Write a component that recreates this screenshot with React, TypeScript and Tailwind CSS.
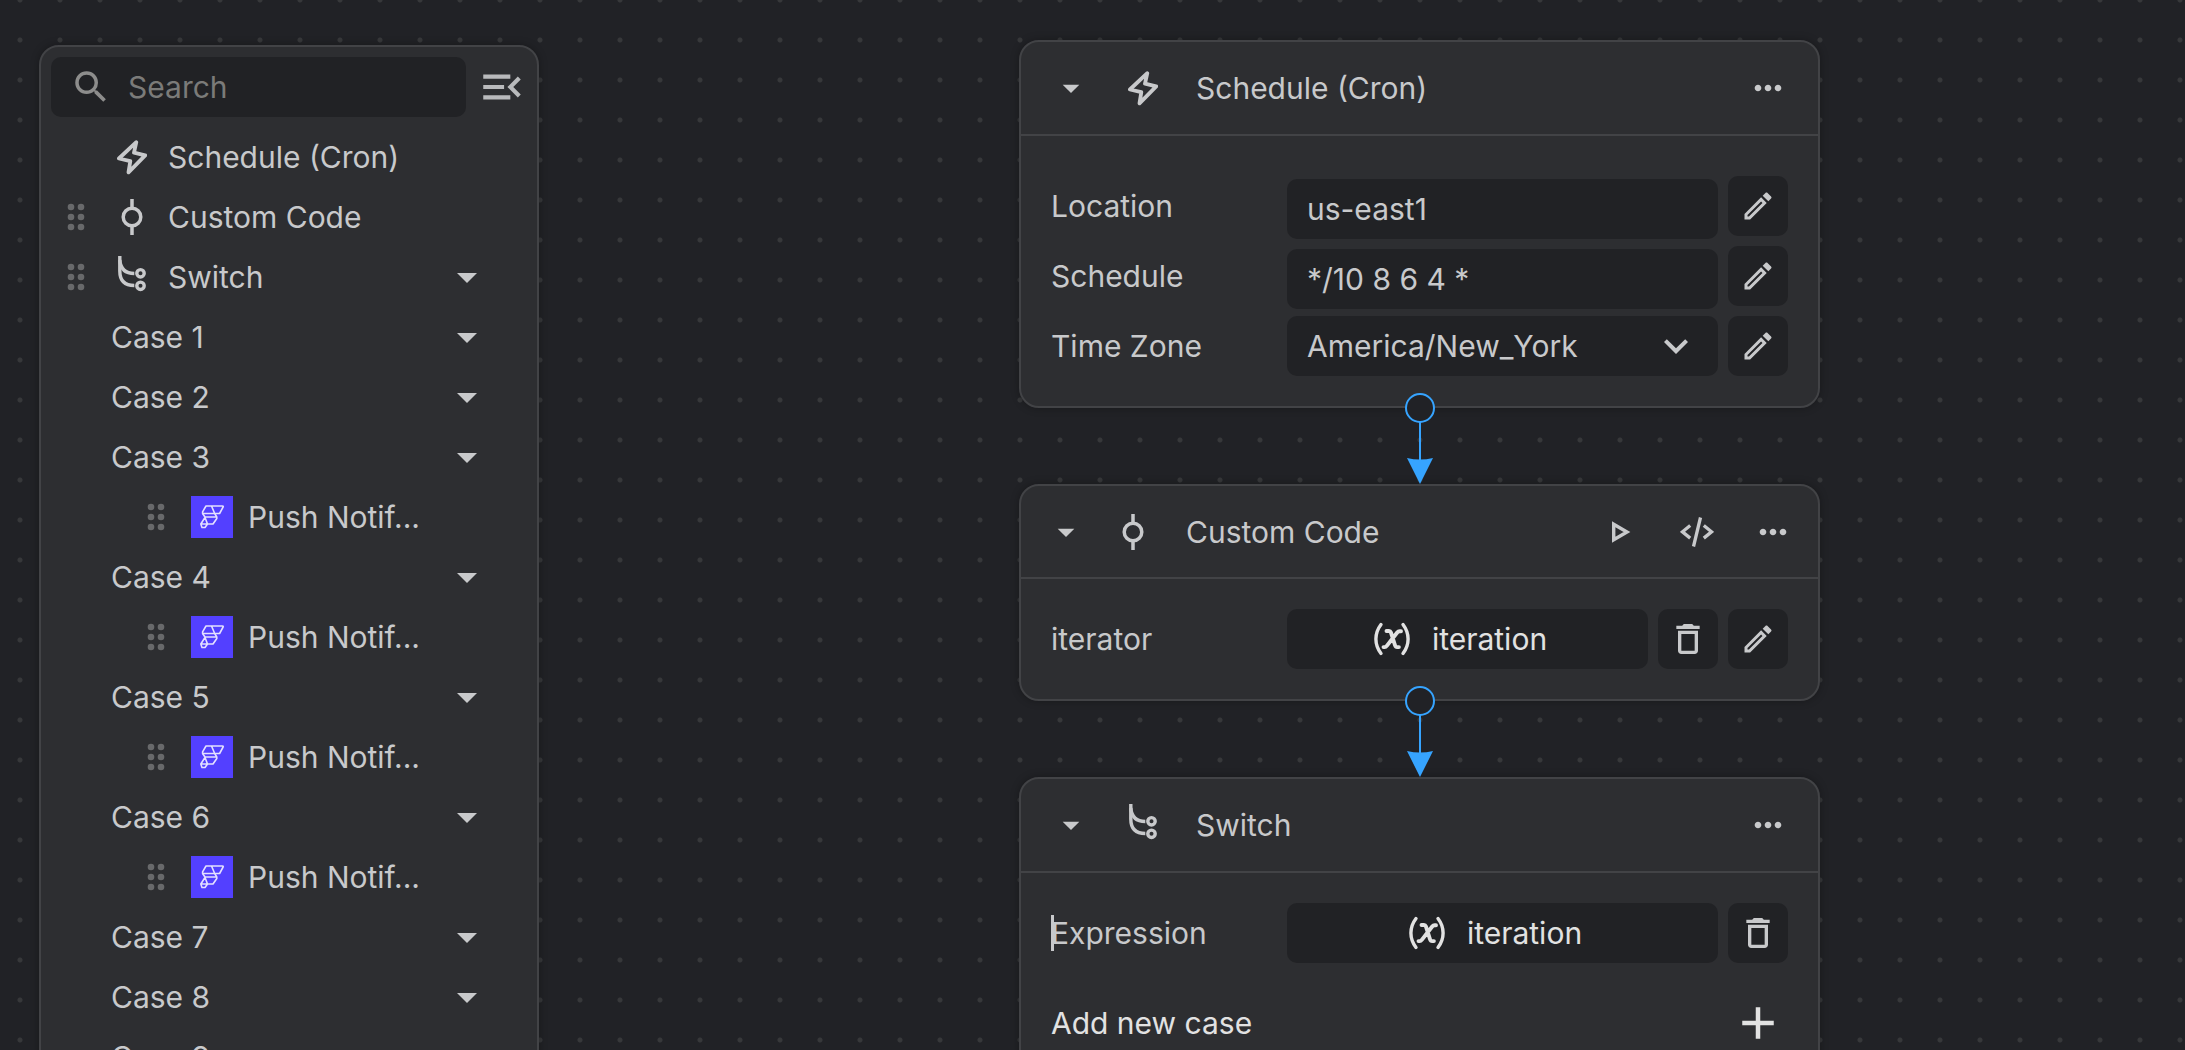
import { useState, type ReactNode } from "react";
import {
  MdAdd,
  MdArrowDropDown,
  MdDeleteOutline,
  MdExpandMore,
  MdMenuOpen,
  MdMoreHoriz,
  MdOutlineEdit,
  MdSearch,
} from "react-icons/md";

function BoltIcon() {
  return (
    <svg width="30" height="35" viewBox="0 0 30 35" fill="none" stroke="currentColor" strokeWidth="3.8" strokeLinejoin="round" aria-hidden="true">
      <path d="M19.3 2.2 17 12.7l11.2 2.6-16.7 17L13.3 21.2 1.9 18.5Z" />
    </svg>
  );
}

function CommitIcon() {
  return (
    <svg width="22" height="36" viewBox="0 0 22 36" fill="none" stroke="currentColor" strokeWidth="3.5" aria-hidden="true">
      <circle cx="11" cy="18" r="8.8" />
      <path d="M11 0v9.2M11 26.8V36" />
    </svg>
  );
}

function BranchIcon() {
  return (
    <svg width="28" height="44" viewBox="0 0 28 44" fill="none" stroke="currentColor" strokeWidth="3.4" aria-hidden="true">
      <path d="M1.8 1v15c0 9.5 4.5 14.5 14.5 14.5" />
      <path d="M1.8 5c.8 9 5.500 13.500 14.500 13.500" />
      <circle cx="22.5" cy="18.3" r="3.7" />
      <circle cx="22.5" cy="30.8" r="3.7" />
    </svg>
  );
}

function PlayIcon() {
  return (
    <svg width="19" height="22" viewBox="0 0 19 22" fill="none" stroke="currentColor" strokeWidth="3.4" aria-hidden="true">
      <path d="M1.7 3.2 15 11 1.7 18.8Z" />
    </svg>
  );
}

function CodeIcon() {
  return (
    <svg width="34" height="30" viewBox="0 0 34 30" fill="none" stroke="currentColor" strokeWidth="3.3" aria-hidden="true">
      <path d="M10.2 8.500 2.500 14.800l7.700 6.300M23.800 8.500l7.700 6.300-7.700 6.300M20.500.5l-7 29" />
    </svg>
  );
}

function VariableIcon() {
  return (
    <svg width="36" height="34" viewBox="0 0 36 34" fill="none" stroke="currentColor" strokeWidth="3.4" strokeLinecap="round" aria-hidden="true">
      <path d="M7 2.500C.2 11.500.2 22.500 7 31.500M29 2.500c6.800 9 6.800 20 0 29" />
      <path strokeWidth="3.9" d="M12.500 9H15c1 0 1.500.4 1.900 1.500l4.200 13c.4 1.200.9 1.600 2 1.600h1.800M27 9.200h-1.400c-1 0-1.700.4-2.400 1.300L13 23.600c-.8 1-1.300 1.500-2.300 1.500H9.500" />
    </svg>
  );
}

function PushLogo() {
  return (
    <span className="flex size-[42px] shrink-0 items-center justify-center bg-[#5340ff] text-[#e4e0ff]">
      <svg width="42" height="42" viewBox="0 0 42 42" fill="none" stroke="currentColor" strokeWidth="1.6" strokeLinejoin="round" aria-hidden="true">
        <path d="M15 10h16.500q1 0 .6 1L28.600 17.500H11.600V15.800ZM20.500 10l3.200 7.500" />
        <path d="M11.600 17.500 14 21h11.800l-2.100-3.500M25.800 21v1.500L22 28h-5.500L14 21.500 9.800 28l1.200 3.500h3l2.500-3.500H9.800" />
      </svg>
    </span>
  );
}

const icons = {
  bolt: <BoltIcon />,
  commit: <CommitIcon />,
  branch: <BranchIcon />,
};

type IconName = keyof typeof icons;

function DragHandle() {
  return (
    <button type="button" aria-label="Drag" className="cursor-grab text-[#68696b]">
      <svg width="18" height="28" viewBox="0 0 18 28" fill="currentColor" aria-hidden="true">
        {[4, 14].map((x) => [4, 14, 24].map((y) => <circle key={`${x}-${y}`} cx={x} cy={y} r="3.3" />))}
      </svg>
    </button>
  );
}

function Caret({ label }: { label: string }) {
  return (
    <button type="button" aria-label={label}>
      <MdArrowDropDown size={48} />
    </button>
  );
}

function StepRow({ icon, title, draggable, expandable }: { icon: IconName; title: string; draggable?: boolean; expandable?: boolean }) {
  return (
    <li className="flex h-[60px] items-center pr-[46px] pl-[26px]">
      <span className="flex w-9 shrink-0">{draggable && <DragHandle />}</span>
      <span className="flex w-[58px] shrink-0 justify-center">{icons[icon]}</span>
      <span className="flex-1 pl-[7px] whitespace-nowrap">{title}</span>
      {expandable && <Caret label={`Collapse ${title}`} />}
    </li>
  );
}

function CaseRow({ title, action }: { title: string; action?: string }) {
  return (
    <>
      <li className="flex h-[60px] items-center justify-between pr-[46px] pl-[70px]">
        <span>{title}</span>
        <Caret label={`Toggle ${title}`} />
      </li>
      {action && (
        <li className="flex h-[60px] items-center pl-[106px]">
          <DragHandle />
          <span className="pl-[26px]">
            <PushLogo />
          </span>
          <span className="pl-[15px] whitespace-nowrap">{action}</span>
        </li>
      )}
    </>
  );
}

const cases = [
  { title: "Case 1" },
  { title: "Case 2" },
  { title: "Case 3", action: "Push Notif..." },
  { title: "Case 4", action: "Push Notif..." },
  { title: "Case 5", action: "Push Notif..." },
  { title: "Case 6", action: "Push Notif..." },
  { title: "Case 7" },
  { title: "Case 8" },
  { title: "Case 9" },
  { title: "Case 10" },
];

function Sidebar() {
  return (
    <aside className="mt-[45px] ml-[39px] w-[500px] shrink-0 self-start rounded-[20px] border-2 border-[#424346] bg-[#2d2e31] shadow-[0_0_8px_rgba(0,0,0,0.3)]">
      <div className="flex items-center gap-[11px] p-[10px]">
        <label className="flex h-[60px] flex-1 items-center gap-4 rounded-[10px] bg-[#212225] pl-[19px] text-[#8d8d8c]">
          <MdSearch size={42} className="shrink-0" />
          <input type="search" aria-label="Search" placeholder="Search" className="w-full min-w-0 bg-transparent outline-none placeholder:text-[#7b7b79]" />
        </label>
        <button type="button" aria-label="Collapse panel" className="text-[#b9babc]">
          <MdMenuOpen size={50} />
        </button>
      </div>
      <ul>
        <StepRow icon="bolt" title="Schedule (Cron)" />
        <StepRow icon="commit" title="Custom Code" draggable />
        <StepRow icon="branch" title="Switch" draggable expandable />
        {cases.map((item) => (
          <CaseRow key={item.title} {...item} />
        ))}
      </ul>
    </aside>
  );
}

function IconButton({ kind, label }: { kind: "edit" | "delete"; label: string }) {
  return (
    <button type="button" aria-label={label} className="flex size-[60px] shrink-0 items-center justify-center rounded-[10px] bg-[#212225]">
      {kind === "edit" ? <MdOutlineEdit size={36} /> : <MdDeleteOutline size={40} />}
    </button>
  );
}

function Card({ icon, title, runnable, children }: { icon: IconName; title: string; runnable?: boolean; children: ReactNode }) {
  return (
    <section className="rounded-[20px] border-2 border-[#424346] bg-[#2d2e31] shadow-[0_0_8px_rgba(0,0,0,0.3)]">
      <header className={`flex items-center border-b-2 border-[#424346] ${runnable ? "h-[93px] px-[25px]" : "h-[94px] px-[30px]"}`}>
        <button type="button" aria-label={`Collapse ${title}`}>
          <MdArrowDropDown size={40} />
        </button>
        <span className={`flex w-10 justify-center ${runnable ? "ml-[27px]" : "ml-8"}`}>{icons[icon]}</span>
        <h2 className="flex-1 pl-[33px]">{title}</h2>
        <div className="flex items-center gap-9">
          {runnable && (
            <>
              <button type="button" aria-label="Run" className="flex size-10 items-center justify-center">
                <PlayIcon />
              </button>
              <button type="button" aria-label="View code" className="flex size-10 items-center justify-center">
                <CodeIcon />
              </button>
            </>
          )}
          <button type="button" aria-label="More options">
            <MdMoreHoriz size={40} />
          </button>
        </div>
      </header>
      {children}
    </section>
  );
}

function TextRow({ id, label, initial }: { id: string; label: string; initial: string }) {
  const [value, setValue] = useState(initial);
  return (
    <div className="flex h-[60px] gap-[10px]">
      <label htmlFor={id} className="w-[226px] shrink-0 self-center">
        {label}
      </label>
      <input
        id={id}
        type="text"
        value={value}
        onChange={(event) => setValue(event.target.value)}
        className="mt-[3px] h-[60px] min-w-0 flex-1 rounded-[10px] bg-[#212225] px-5 outline-none"
      />
      <IconButton kind="edit" label={`Edit ${label}`} />
    </div>
  );
}

function VariableRow({ label, editable, caret }: { label: string; editable?: boolean; caret?: boolean }) {
  return (
    <div className="flex h-[60px] items-center gap-[10px]">
      <span className="relative w-[226px] shrink-0">
        {label}
        {caret && <span className="absolute top-0 left-0 h-9 w-[3px] bg-[#c8c9cb]" />}
      </span>
      <button type="button" aria-label={`${label}: iteration`} className="flex h-[60px] flex-1 items-center justify-center gap-[22px] rounded-[10px] bg-[#212225] pr-[14px] text-[#e2e2e2]">
        <VariableIcon />
        iteration
      </button>
      <IconButton kind="delete" label={`Delete ${label}`} />
      {editable && <IconButton kind="edit" label={`Edit ${label}`} />}
    </div>
  );
}

function Connector() {
  return (
    <div className="relative -mt-[15px] flex h-[91px] justify-center">
      <svg width="30" height="91" viewBox="0 0 30 91" aria-hidden="true">
        <circle cx="15" cy="15" r="14" fill="#212226" stroke="#36a4ff" strokeWidth="2" />
        <path d="M15 29v38" stroke="#36a4ff" strokeWidth="2" />
        <path d="M2 65q13 3 26 0L15 91Z" fill="#36a4ff" />
      </svg>
    </div>
  );
}

export default function App() {
  return (
    <div className="flex h-screen overflow-hidden bg-[#212226] bg-[radial-gradient(circle,#37383a_2px,transparent_3px)] bg-[size:40px_40px] bg-[position:0_-20px] font-[Inter,sans-serif] text-[30px] leading-9 font-normal text-[#c8c9cb] [font-optical-sizing:none]">
      <Sidebar />
      <main className="mt-10 ml-[480px] w-[801px] shrink-0 self-start">
        <Card icon="bolt" title="Schedule (Cron)">
          <div className="flex flex-col gap-[10px] px-[30px] pt-10 pb-[30px]">
            <TextRow id="location" label="Location" initial="us-east1" />
            <TextRow id="schedule" label="Schedule" initial="*/10 8 6 4 *" />
            <div className="flex h-[60px] items-center gap-[10px]">
              <label htmlFor="timezone" className="w-[226px] shrink-0">
                Time Zone
              </label>
              <div className="relative h-[60px] min-w-0 flex-1">
                <select id="timezone" defaultValue="America/New_York" className="h-[60px] w-full appearance-none rounded-[10px] bg-[#212225] px-5 outline-none">
                  <option>America/New_York</option>
                  <option>America/Chicago</option>
                  <option>Europe/London</option>
                </select>
                <MdExpandMore size={48} className="pointer-events-none absolute top-[6px] right-[18px]" />
              </div>
              <IconButton kind="edit" label="Edit Time Zone" />
            </div>
          </div>
        </Card>
        <Connector />
        <Card icon="commit" title="Custom Code" runnable>
          <div className="p-[30px]">
            <VariableRow label="iterator" editable />
          </div>
        </Card>
        <Connector />
        <Card icon="branch" title="Switch">
          <div className="p-[30px]">
            <VariableRow label="Expression" caret />
            <button type="button" className="mt-[30px] flex h-[60px] w-full items-center justify-between pr-[3px] text-[#e2e2e2]">
              Add new case
              <MdAdd size={54} />
            </button>
          </div>
        </Card>
      </main>
    </div>
  );
}
